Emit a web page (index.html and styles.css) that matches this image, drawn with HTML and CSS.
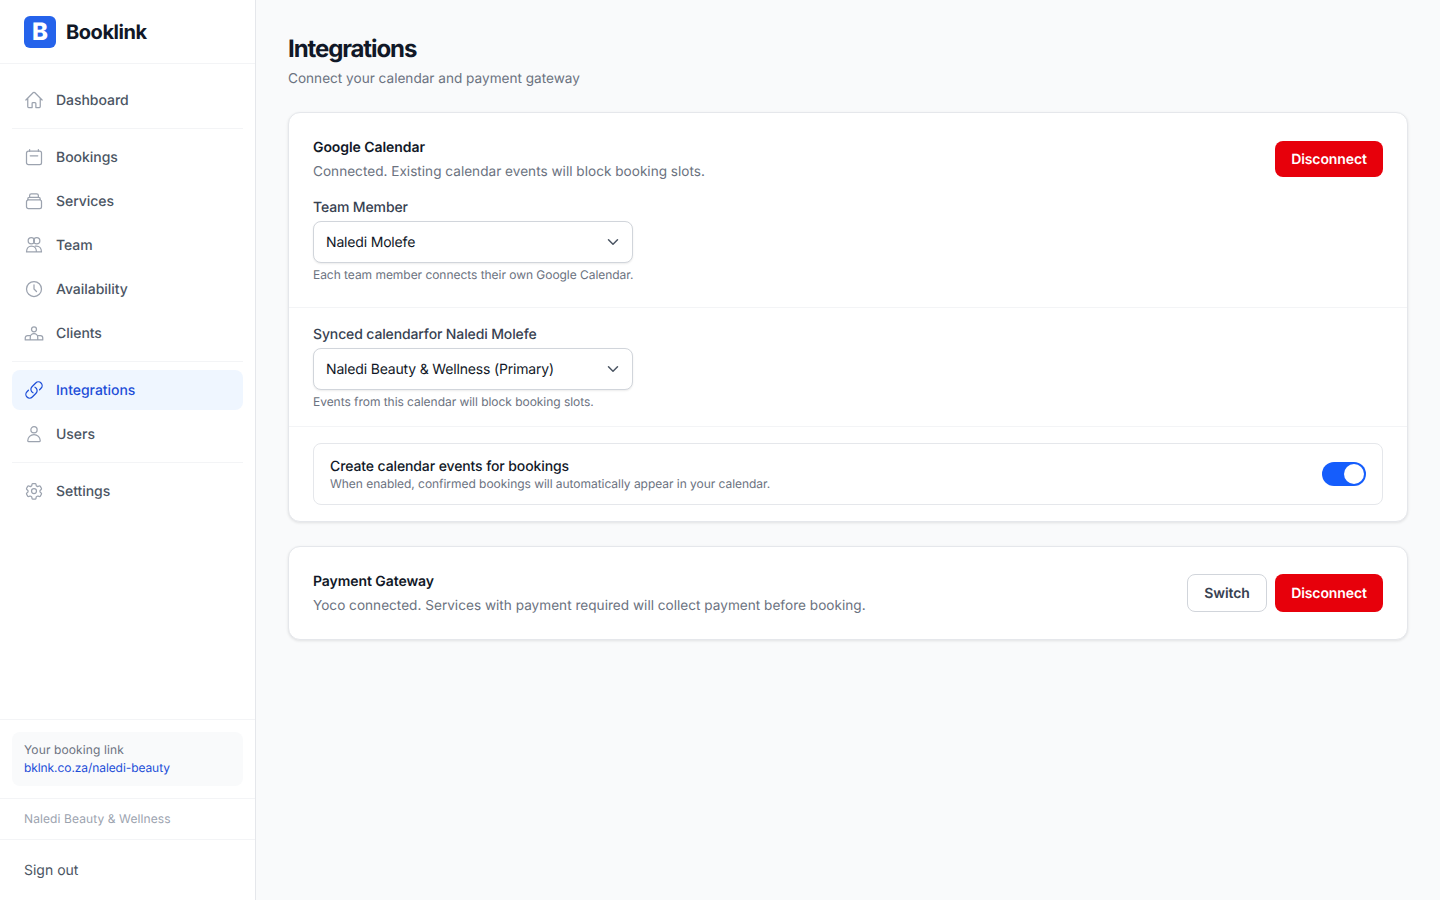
FILE: index.html
```html
<!DOCTYPE html>
<html lang="en">
<head>
  <meta charset="UTF-8" />
  <title>Integrations - Booklink</title>
  <link rel="stylesheet" href="styles.css">
</head>
<body>
  <div class="layout">
    <aside class="sidebar">
      <div class="brand">
        <span class="brand-mark">B</span>
        <span class="brand-name">Booklink</span>
      </div>

      <nav class="nav">
        <a class="nav-item" href="#">
          <svg class="nav-icon" viewBox="0 0 24 24"><path d="M2.25 12l8.95-8.95a1.12 1.12 0 0 1 1.6 0L21.75 12M4.5 9.75V19.9c0 .62.5 1.1 1.1 1.1h4.15v-4.9c0-.62.5-1.1 1.1-1.1h2.3c.62 0 1.1.5 1.1 1.1V21h4.15c.62 0 1.1-.5 1.1-1.1V9.75"/></svg>
          <span class="nav-label">Dashboard</span>
        </a>
        <div class="nav-divider"></div>
        <a class="nav-item" href="#">
          <svg class="nav-icon" viewBox="0 0 24 24"><path d="M6.75 3v2.25M17.25 3v2.25M3 7.25A2.25 2.25 0 0 1 5.25 5h13.5A2.25 2.25 0 0 1 21 7.25v11.5A2.25 2.25 0 0 1 18.75 21H5.25A2.25 2.25 0 0 1 3 18.75zM7.5 10.5h9"/></svg>
          <span class="nav-label">Bookings</span>
        </a>
        <a class="nav-item" href="#">
          <svg class="nav-icon" viewBox="0 0 24 24"><path d="M3 13a2.25 2.25 0 0 1 2.25-2.25h13.5A2.25 2.25 0 0 1 21 13v5.75A2.25 2.25 0 0 1 18.75 21H5.25A2.25 2.25 0 0 1 3 18.75zM4.5 10.75V9.5a2 2 0 0 1 2-2h11a2 2 0 0 1 2 2v1.25M6.75 7.5V5.5a2 2 0 0 1 2-2h6.5a2 2 0 0 1 2 2v2"/></svg>
          <span class="nav-label">Services</span>
        </a>
        <a class="nav-item" href="#">
          <svg class="nav-icon" viewBox="0 0 24 24"><circle cx="8.75" cy="6.75" r="3.75"/><circle cx="15.25" cy="6.75" r="3.75"/><path d="M3 20.25c0-4 2.5-7 6-7s6 3 6 7zM13.5 13.4c.6-.1 1-.15 1.5-.15 3.5 0 6 3 6 7h-6"/></svg>
          <span class="nav-label">Team</span>
        </a>
        <a class="nav-item" href="#">
          <svg class="nav-icon" viewBox="0 0 24 24"><circle cx="12" cy="12" r="9"/><path d="M12 7v5l3 3"/></svg>
          <span class="nav-label">Availability</span>
        </a>
        <a class="nav-item" href="#">
          <svg class="nav-icon" viewBox="0 0 24 24"><circle cx="12" cy="7.5" r="3"/><path d="M7.5 20.25v-3a4.5 4.5 0 0 1 9 0v3M1.5 20.25v-2.5a2.75 2.75 0 0 1 2.75-2.75H7.5M22.5 20.25v-2.5A2.75 2.75 0 0 0 19.75 15H16.5M1.5 20.25h21"/></svg>
          <span class="nav-label">Clients</span>
        </a>
        <div class="nav-divider"></div>
        <a class="nav-item active" href="#">
          <svg class="nav-icon" viewBox="0 0 24 24"><path d="M13.19 8.688a4.5 4.5 0 0 1 1.242 7.244l-4.5 4.5a4.5 4.5 0 0 1-6.364-6.364l1.757-1.757m13.35-.622 1.757-1.757a4.5 4.5 0 0 0-6.364-6.364l-4.5 4.5a4.5 4.5 0 0 0 1.242 7.244"/></svg>
          <span class="nav-label">Integrations</span>
        </a>
        <a class="nav-item" href="#">
          <svg class="nav-icon" viewBox="0 0 24 24"><circle cx="12" cy="7" r="3.75"/><path d="M4.5 20.1a7.5 7.5 0 0 1 15 0c0 .5-.4.9-.9.9H5.4a.9.9 0 0 1-.9-.9z"/></svg>
          <span class="nav-label">Users</span>
        </a>
        <div class="nav-divider"></div>
        <a class="nav-item" href="#">
          <svg class="nav-icon" viewBox="0 0 24 24"><path d="M9.6 3.9c.1-.55.57-.9 1.1-.9h2.6c.53 0 1 .35 1.1.9l.2 1.3c.07.4.35.73.72.93l.5.28c.36.2.78.25 1.17.1l1.25-.47c.5-.19 1.07.01 1.34.47l1.3 2.25c.27.46.16 1.05-.26 1.39l-1.03.85c-.31.25-.46.64-.45 1.04v.58c-.01.4.14.79.45 1.04l1.03.85c.42.34.53.93.26 1.39l-1.3 2.25c-.27.46-.84.66-1.34.47l-1.25-.47c-.39-.15-.81-.1-1.17.1l-.5.28c-.37.2-.65.53-.72.93l-.2 1.3c-.1.55-.57.9-1.1.9h-2.6c-.53 0-1-.35-1.1-.9l-.2-1.3c-.07-.4-.35-.73-.72-.93l-.5-.28c-.36-.2-.78-.25-1.17-.1l-1.25.47c-.5.19-1.07-.01-1.34-.47l-1.3-2.25a1.1 1.1 0 0 1 .26-1.39l1.03-.85c.31-.25.46-.64.45-1.04v-.58c.01-.4-.14-.79-.45-1.04l-1.03-.85a1.1 1.1 0 0 1-.26-1.39l1.3-2.25c.27-.46.84-.66 1.34-.47l1.25.47c.39.15.81.1 1.17-.1l.5-.28c.37-.2.65-.53.72-.93z"/><circle cx="12" cy="12" r="3"/></svg>
          <span class="nav-label">Settings</span>
        </a>
      </nav>

      <div class="side-section">
        <div class="booking-link">
          <p class="booking-label">Your booking link</p>
          <a class="booking-url" href="#">bklnk.co.za/naledi-beauty</a>
        </div>
      </div>
      <div class="business-name">Naledi Beauty &amp; Wellness</div>
      <div class="signout"><a href="#">Sign out</a></div>
    </aside>

    <main class="main">
      <h1>Integrations</h1>
      <p class="subtitle">Connect your calendar and payment gateway</p>

      <section class="card">
        <div class="card-section first">
          <div class="row-head">
            <div>
              <h3>Google Calendar</h3>
              <p class="desc">Connected. Existing calendar events will block booking slots.</p>
            </div>
            <button class="btn btn-danger">Disconnect</button>
          </div>
          <div class="field">
            <label>Team Member</label>
            <div class="select">
              <span class="select-value">Naledi Molefe</span>
              <svg class="chevron" viewBox="0 0 20 20"><path d="M5.5 7.75L10 12.25l4.5-4.5"/></svg>
            </div>
            <p class="hint">Each team member connects their own Google Calendar.</p>
          </div>
        </div>

        <div class="card-section second">
          <div class="field">
            <label>Synced calendarfor Naledi Molefe</label>
            <div class="select">
              <span class="select-value">Naledi Beauty &amp; Wellness (Primary)</span>
              <svg class="chevron" viewBox="0 0 20 20"><path d="M5.5 7.75L10 12.25l4.5-4.5"/></svg>
            </div>
            <p class="hint">Events from this calendar will block booking slots.</p>
          </div>
        </div>

        <div class="card-section third">
          <div class="option">
            <div class="option-text">
              <p class="option-title">Create calendar events for bookings</p>
              <p class="option-desc">When enabled, confirmed bookings will automatically appear in your calendar.</p>
            </div>
            <span class="toggle"><span class="knob"></span></span>
          </div>
        </div>
      </section>

      <section class="card gateway">
        <div class="gateway-text">
          <h3>Payment Gateway</h3>
          <p class="desc">Yoco connected. Services with payment required will collect payment before booking.</p>
        </div>
        <div class="actions">
          <button class="btn btn-outline">Switch</button>
          <button class="btn btn-danger">Disconnect</button>
        </div>
      </section>
    </main>
  </div>
</body>
</html>
```

FILE: styles.css
```css
* {
  box-sizing: border-box;
}
body {
  margin: 0;
  font-family: Inter, "Liberation Sans", sans-serif;
  background: #f9fafb;
  color: #111827;
  text-rendering: geometricPrecision;
}
p, h1, h3 {
  margin: 0;
}
a {
  text-decoration: none;
}
.layout {
  display: flex;
  height: 900px;
  overflow: hidden;
}

/* Sidebar */
.sidebar {
  width: 256px;
  flex-shrink: 0;
  display: flex;
  flex-direction: column;
  background: white;
  border-right: 1px solid #e5e7eb;
}
.brand {
  height: 64px;
  flex-shrink: 0;
  display: flex;
  align-items: center;
  gap: 10px;
  padding: 0 24px;
  border-bottom: 1px solid #f3f4f6;
}
.brand-mark {
  width: 32px;
  height: 32px;
  display: flex;
  align-items: center;
  justify-content: center;
  border-radius: 6px;
  background: #2563eb;
  color: white;
  font-size: 24px;
  font-weight: 800;
}
.brand-name {
  font-size: 20px;
  font-weight: 700;
  letter-spacing: -0.45px;
}
.nav {
  flex: 1;
  display: flex;
  flex-direction: column;
  gap: 4px;
  padding: 16px 12px 0;
}
.nav-item {
  height: 40px;
  display: flex;
  align-items: center;
  gap: 12px;
  padding: 0 12px;
  border-radius: 8px;
  color: #4b5563;
  font-size: 14px;
  font-weight: 500;
}
.nav-label {
  letter-spacing: -0.04px;
}
.nav-icon {
  width: 20px;
  height: 20px;
  fill: none;
  stroke: #9ca3af;
  stroke-width: 1.5;
  stroke-linecap: round;
  stroke-linejoin: round;
}
.nav-item.active {
  background: #eff6ff;
  color: #1d4ed8;
}
.nav-item.active .nav-icon {
  stroke: #1d4ed8;
}
.nav-divider {
  height: 1px;
  margin: 4px 0;
  background: #f3f4f6;
}
.side-section {
  padding: 12px;
  border-top: 1px solid #f3f4f6;
}
.booking-link {
  height: 54px;
  padding: 10px 12px;
  border-radius: 8px;
  background: #f9fafb;
  font-size: 12px;
  line-height: 16px;
}
.booking-label {
  margin-bottom: 2px;
  color: #6b7280;
  letter-spacing: 0.12px;
}
.booking-url {
  color: #1d4ed8;
  letter-spacing: -0.08px;
}
.business-name {
  height: 41px;
  display: flex;
  align-items: center;
  padding: 0 24px 2px;
  border-top: 1px solid #f3f4f6;
  color: #9ca3af;
  font-size: 12px;
  letter-spacing: 0.1px;
}
.signout {
  height: 61px;
  display: flex;
  align-items: center;
  padding: 0 24px;
  border-top: 1px solid #f3f4f6;
  font-size: 14px;
}
.signout a {
  color: #4b5563;
}

/* Main */
.main {
  flex: 1;
  padding: 32px;
}
h1 {
  font-size: 24px;
  line-height: 34px;
  font-weight: 700;
  letter-spacing: -1.1px;
}
.subtitle {
  margin-top: 3px;
  margin-bottom: 23px;
  color: #6b7280;
  font-size: 13.6px;
  line-height: 20px;
}
.card {
  margin-bottom: 24px;
  background: white;
  border: 1px solid #e5e7eb;
  border-radius: 12px;
  box-shadow: 0 1px 3px rgba(0, 0, 0, 0.1);
}
.card-section {
  padding: 0 24px;
  border-bottom: 1px solid #f3f4f6;
}
.card-section.first {
  height: 195px;
  padding-top: 25px;
}
.card-section.second {
  height: 119px;
  padding-top: 17px;
}
.card-section.third {
  padding-top: 16px;
  padding-bottom: 16px;
  border-bottom: none;
}
.row-head {
  display: flex;
  justify-content: space-between;
  align-items: flex-start;
}
h3 {
  font-size: 14px;
  line-height: 20px;
  font-weight: 600;
  letter-spacing: -0.07px;
}
.desc {
  margin-top: 4px;
  color: #6b7280;
  font-size: 13.6px;
  line-height: 20px;
  letter-spacing: 0.01px;
}
.btn {
  height: 36px;
  padding: 0 16px;
  border-radius: 8px;
  font-family: inherit;
  font-size: 14px;
  font-weight: 600;
  letter-spacing: -0.1px;
  text-rendering: geometricPrecision;
  cursor: pointer;
}
.btn-danger {
  width: 108px;
  border: none;
  background: #e7000b;
  color: white;
}
.btn-outline {
  width: 80px;
  border: 1px solid #d1d5db;
  background: white;
  color: #374151;
}
.row-head .btn {
  margin-top: 3px;
}
.field label {
  display: block;
  margin-bottom: 3px;
  color: #374151;
  font-size: 14px;
  font-weight: 500;
  line-height: 20px;
  letter-spacing: -0.13px;
}
.row-head + .field {
  margin-top: 16px;
}
.select {
  width: 320px;
  height: 42px;
  display: flex;
  align-items: center;
  justify-content: space-between;
  padding: 0 9px 0 12px;
  background: white;
  border: 1px solid #d1d5db;
  border-radius: 8px;
  box-shadow: 0 1px 2px rgba(0, 0, 0, 0.08);
  font-size: 14px;
}
.select-value {
  letter-spacing: -0.17px;
}
.chevron {
  width: 20px;
  height: 20px;
  fill: none;
  stroke: #4b5563;
  stroke-width: 1.5;
  stroke-linecap: round;
  stroke-linejoin: round;
}
.hint {
  margin-top: 4px;
  color: #6b7280;
  font-size: 12px;
  line-height: 16px;
  letter-spacing: -0.04px;
}
.option {
  height: 62px;
  display: flex;
  align-items: center;
  justify-content: space-between;
  padding: 0 16px;
  border: 1px solid #e5e7eb;
  border-radius: 8px;
}
.option-text {
  padding-top: 3px;
}
.option-title {
  font-size: 14px;
  font-weight: 500;
  line-height: 16px;
  letter-spacing: -0.11px;
}
.option-desc {
  margin-top: 1px;
  color: #6b7280;
  font-size: 12px;
  line-height: 16px;
  letter-spacing: -0.04px;
}
.toggle {
  width: 44px;
  height: 24px;
  display: flex;
  align-items: center;
  justify-content: flex-end;
  padding: 2px;
  border-radius: 12px;
  background: #155dfc;
}
.knob {
  width: 20px;
  height: 20px;
  border-radius: 50%;
  background: white;
}
.gateway {
  height: 94px;
  display: flex;
  align-items: center;
  justify-content: space-between;
  padding: 0 24px;
}
.gateway-text {
  padding-top: 2px;
}
.actions {
  display: flex;
  align-items: center;
  gap: 8px;
}
.actions .btn {
  height: 38px;
}
```
